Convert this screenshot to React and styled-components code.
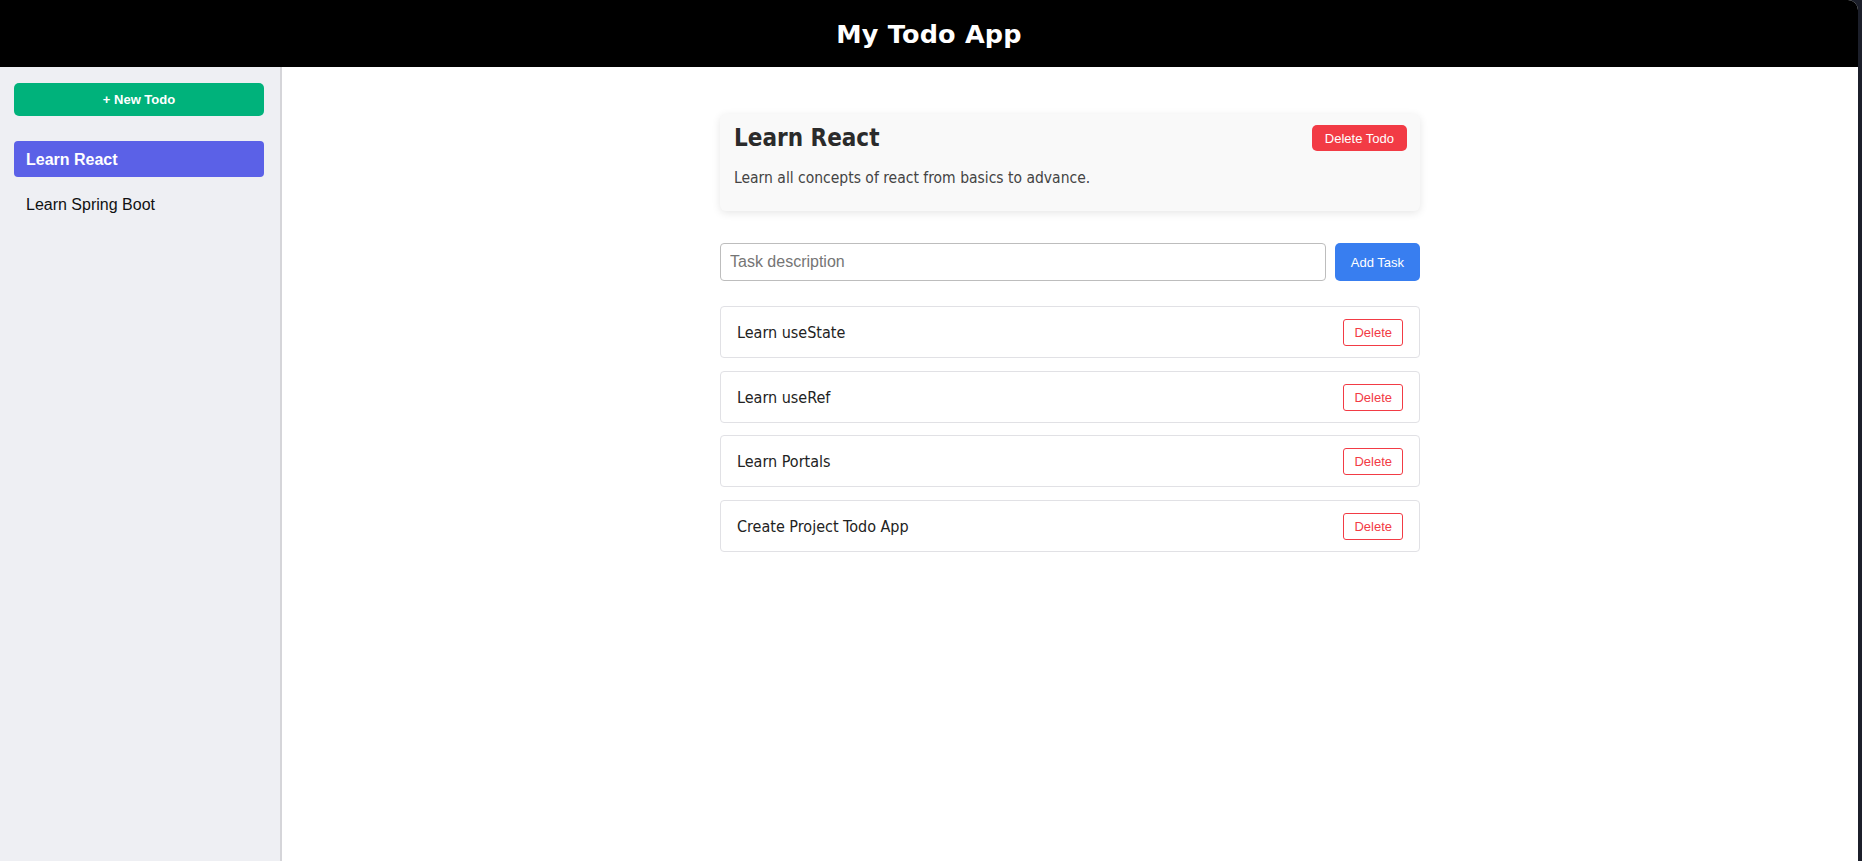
import React, { useState } from 'react';
import styled, { createGlobalStyle } from 'styled-components';

const GlobalStyle = createGlobalStyle`
  html, body {
    margin: 0;
    padding: 0;
    height: 100%;
    background-color: #1c1f2a;
  }
  #root {
    height: 100%;
  }
  * {
    box-sizing: border-box;
  }
`;

const AppShell = styled.div`
  display: flex;
  flex-direction: column;
  height: 100vh;
  margin-right: 4px;
  background-color: #ffffff;
  border-top-right-radius: 10px;
  overflow: hidden;
`;

const Header = styled.header`
  height: 67px;
  flex-shrink: 0;
  background-color: #000000;
  display: flex;
  align-items: center;
  justify-content: center;
`;

const TitleH1 = styled.h1`
  margin: 0;
  color: #ffffff;
  font-family: 'DejaVu Sans', Verdana, sans-serif;
  font-weight: bold;
  font-size: 25.5px;
  letter-spacing: 0.2px;
`;

const Body = styled.div`
  flex: 1;
  display: flex;
  min-height: 0;
`;

const Sidebar = styled.aside`
  width: 282px;
  flex-shrink: 0;
  background-color: #eeeff3;
  border-right: 2px solid #d5d5d9;
  padding: 16px 16px 0 14px;
  display: flex;
  flex-direction: column;
`;

const NewTodoButton = styled.button`
  height: 33px;
  width: 100%;
  border: none;
  border-radius: 5px;
  background-color: #00b27b;
  color: #ffffff;
  font-family: 'Liberation Sans', Arial, sans-serif;
  font-weight: bold;
  font-size: 13px;
  cursor: pointer;
  margin-bottom: 25px;
`;

const TodoList = styled.ul`
  list-style: none;
  margin: 0;
  padding: 0;
  display: flex;
  flex-direction: column;
  gap: 9px;
`;

const TodoItem = styled.li`
  height: 36px;
  display: flex;
  align-items: center;
  padding: 1px 0 0 12px;
  border-radius: 4px;
  background-color: ${(p) => (p.$active ? '#5b61e7' : 'transparent')};
  color: ${(p) => (p.$active ? '#ffffff' : '#111111')};
  font-family: 'Liberation Sans', Arial, sans-serif;
  font-weight: ${(p) => (p.$active ? 'bold' : 'normal')};
  font-size: 16px;
  cursor: pointer;
`;

const Main = styled.main`
  flex: 1;
  padding-top: 47px;
`;

const Content = styled.div`
  max-width: 700px;
  margin: 0 auto;
  font-family: 'DejaVu Sans Condensed', 'DejaVu Sans', Tahoma, sans-serif;
  font-stretch: condensed;
`;

const TodoCard = styled.section`
  background-color: #f9f9f9;
  border-radius: 6px;
  box-shadow: 0 2px 8px rgba(0, 0, 0, 0.1);
  padding: 9px 13px 23px 14px;
  margin-bottom: 32px;
`;

const CardHeader = styled.div`
  display: flex;
  align-items: center;
  justify-content: space-between;
  height: 30px;
`;

const CardTitle = styled.h2`
  margin: 0;
  font-size: 24px;
  font-weight: bold;
  color: #2b2b2b;
`;

const CardText = styled.p`
  margin: 15px 0 0;
  font-size: 15.5px;
  line-height: 20px;
  color: #444444;
`;

const DangerButton = styled.button`
  height: 26px;
  padding: 0 13px;
  border: none;
  border-radius: 5px;
  background-color: #f23b45;
  color: #ffffff;
  font-family: 'Liberation Sans', Arial, sans-serif;
  font-size: 13px;
  cursor: pointer;
`;

const TaskForm = styled.form`
  display: flex;
  gap: 9px;
  margin-bottom: 25px;
`;

const TaskInput = styled.input`
  flex: 1;
  height: 38px;
  padding: 0 9px;
  border: 1px solid #bdbdbd;
  border-radius: 4px;
  font-family: 'Liberation Sans', Arial, sans-serif;
  font-size: 16px;
  color: #333333;
  outline: none;

  &::placeholder {
    color: #757575;
  }
`;

const AddButton = styled.button`
  height: 38px;
  padding: 0 16px;
  border: none;
  border-radius: 5px;
  background-color: #387ef0;
  color: #ffffff;
  font-family: 'Liberation Sans', Arial, sans-serif;
  font-size: 13px;
  cursor: pointer;
`;

const TaskList = styled.div`
  display: flex;
  flex-direction: column;
  gap: 12.5px;
`;

const TaskRow = styled.div`
  height: 52px;
  display: flex;
  align-items: center;
  justify-content: space-between;
  padding: 1px 16px 0 16px;
  border: 1px solid #e1e1e5;
  border-radius: 4px;
  background-color: #ffffff;
`;

const TaskText = styled.span`
  font-size: 16px;
  color: #222222;
`;

const OutlineButton = styled.button`
  height: 27px;
  padding: 0 10px;
  border: 1px solid #f23b45;
  border-radius: 3px;
  background-color: #ffffff;
  color: #f23b45;
  font-family: 'Liberation Sans', Arial, sans-serif;
  font-size: 13px;
  cursor: pointer;
`;

const todos = [
  {
    id: 1,
    title: 'Learn React',
    description: 'Learn all concepts of react from basics to advance.',
    tasks: ['Learn useState', 'Learn useRef', 'Learn Portals', 'Create Project Todo App'],
  },
  {
    id: 2,
    title: 'Learn Spring Boot',
    description: 'Learn spring boot from scratch.',
    tasks: [],
  },
];

function App() {
  const [activeId, setActiveId] = useState(1);
  const active = todos.find((t) => t.id === activeId);

  return (
    <>
      <GlobalStyle />
      <AppShell>
        <Header>
          <TitleH1>My Todo App</TitleH1>
        </Header>
        <Body>
          <Sidebar>
            <NewTodoButton>+ New Todo</NewTodoButton>
            <TodoList>
              {todos.map((todo) => (
                <TodoItem
                  key={todo.id}
                  $active={todo.id === activeId}
                  onClick={() => setActiveId(todo.id)}
                >
                  {todo.title}
                </TodoItem>
              ))}
            </TodoList>
          </Sidebar>
          <Main>
            <Content>
              <TodoCard>
                <CardHeader>
                  <CardTitle>{active.title}</CardTitle>
                  <DangerButton>Delete Todo</DangerButton>
                </CardHeader>
                <CardText>{active.description}</CardText>
              </TodoCard>
              <TaskForm onSubmit={(e) => e.preventDefault()}>
                <TaskInput placeholder="Task description" />
                <AddButton type="submit">Add Task</AddButton>
              </TaskForm>
              <TaskList>
                {active.tasks.map((task) => (
                  <TaskRow key={task}>
                    <TaskText>{task}</TaskText>
                    <OutlineButton>Delete</OutlineButton>
                  </TaskRow>
                ))}
              </TaskList>
            </Content>
          </Main>
        </Body>
      </AppShell>
    </>
  );
}

export default App;
